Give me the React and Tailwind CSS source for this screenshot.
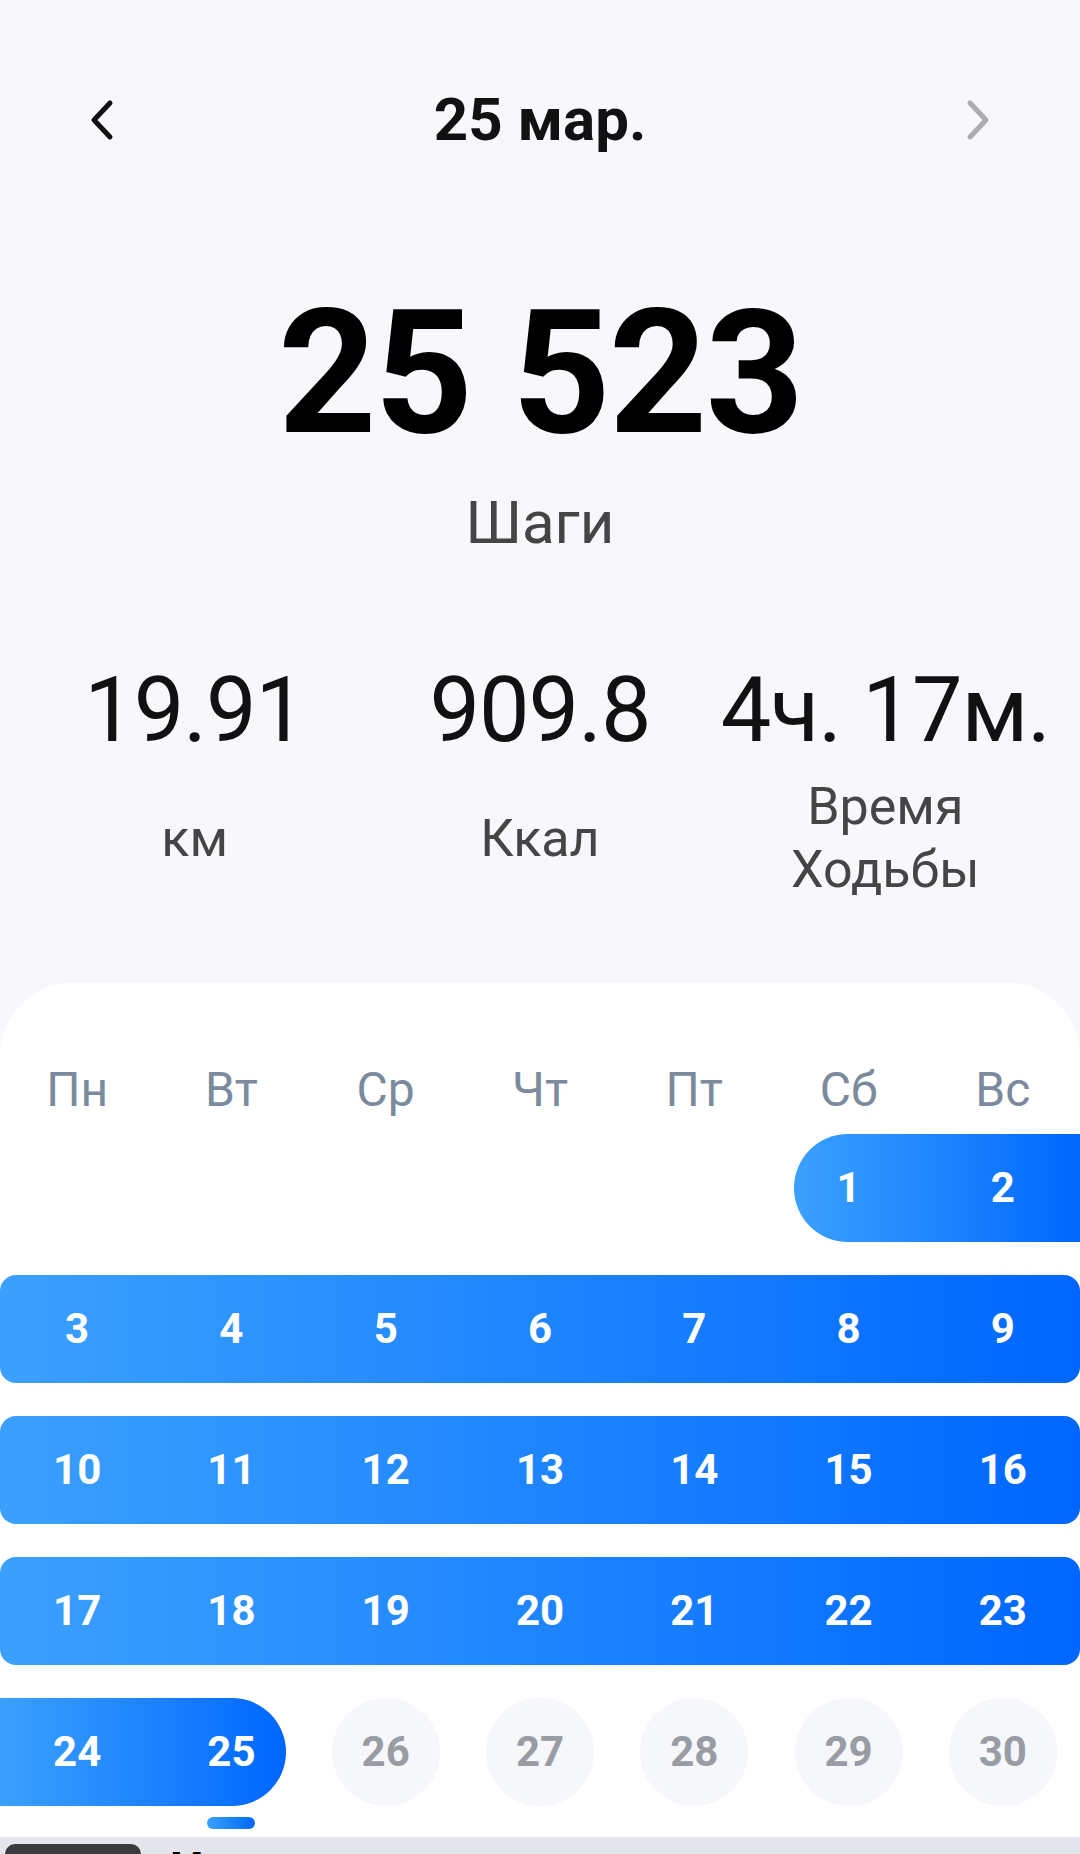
import React from 'react';

const weekdays = ['Пн', 'Вт', 'Ср', 'Чт', 'Пт', 'Сб', 'Вс'];

const colStart = ['col-start-1', 'col-start-2', 'col-start-3', 'col-start-4', 'col-start-5', 'col-start-6', 'col-start-7'];

// each week: day numbers by column, and the class of the selected range bar
const weeks = [
  { days: [null, null, null, null, null, 1, 2], bar: 'col-start-6 col-span-2 ml-[23px] rounded-l-full rounded-r-[16px]', sel: 7 },
  { days: [3, 4, 5, 6, 7, 8, 9], bar: 'col-start-1 col-span-7 rounded-[16px]', sel: 7 },
  { days: [10, 11, 12, 13, 14, 15, 16], bar: 'col-start-1 col-span-7 rounded-[16px]', sel: 7 },
  { days: [17, 18, 19, 20, 21, 22, 23], bar: 'col-start-1 col-span-7 rounded-[16px]', sel: 7 },
  { days: [24, 25, 26, 27, 28, 29, 30], bar: 'col-start-1 col-span-2 mr-[23px] rounded-l-[16px] rounded-r-full', sel: 2 },
];

const Chevron = ({ dir, color }) => (
  <svg width="30" height="44" viewBox="0 0 30 44" fill="none">
    <path
      d={dir === 'left' ? 'M22 5 L6 22 L22 39' : 'M8 5 L24 22 L8 39'}
      stroke={color}
      strokeWidth="5"
      strokeLinecap="round"
      strokeLinejoin="round"
    />
  </svg>
);

const Stat = ({ value }) => (
  <div className="text-center text-[90px] leading-none text-[#111111] tracking-[-1px]">{value}</div>
);

const WeekRow = ({ week }) => (
  <div className="grid grid-cols-7 h-[108px]">
    <div className={`row-start-1 h-[108px] bg-linear-to-r from-[#3ba0fd] to-[#0066ff] ${week.bar}`} />
    {week.days.map((d, i) => {
      if (d === null) return null;
      const selected = i < week.sel;
      return (
        <div key={d} className={`row-start-1 ${colStart[i]} flex items-center justify-center`}>
          {selected ? (
            <span className="text-[42px] font-bold text-white leading-none">{d}</span>
          ) : (
            <span className="w-[108px] h-[108px] rounded-full bg-[#f6f7fb] flex items-center justify-center text-[42px] font-bold text-[#9a9ca4] leading-none">
              {d}
            </span>
          )}
        </div>
      );
    })}
  </div>
);

export default function App() {
  return (
    <div className="min-h-screen bg-[#f8f8fc] font-['Roboto',sans-serif] overflow-hidden">
      <div className="pt-[60px] h-[180px] px-[88px] flex items-center justify-between">
        <Chevron dir="left" color="#111111" />
        <div className="text-[60px] font-bold leading-none text-[#111111]">25 мар.</div>
        <Chevron dir="right" color="#ababb1" />
      </div>

      <div className="mt-[107px] text-center text-[172px] font-bold leading-none text-black tracking-[-2px]">
        25 523
      </div>
      <div className="mt-[34px] text-center text-[60px] leading-none text-[#454545]">Шаги</div>

      <div className="mt-[113px] px-[22px] grid grid-cols-3">
        <Stat value="19.91" />
        <Stat value="909.8" />
        <Stat value="4ч. 17м." />
      </div>
      <div className="mt-[19px] px-[22px] grid grid-cols-3 items-center h-[126px] text-[52px] leading-[63px] text-[#454545] text-center">
        <div>км</div>
        <div>Ккал</div>
        <div>
          Время
          <br />
          Ходьбы
        </div>
      </div>

      <div className="mt-[82px] bg-white rounded-t-[72px] pt-[83px]">
        <div className="grid grid-cols-7">
          {weekdays.map((w) => (
            <div key={w} className="text-center text-[48px] leading-none text-[#7b8a9c]">
              {w}
            </div>
          ))}
        </div>

        <div className="mt-[20px] flex flex-col gap-[33px]">
          {weeks.map((w, i) => (
            <WeekRow key={i} week={w} />
          ))}
        </div>

        <div className="mt-[11px] grid grid-cols-7">
          <div className="col-start-2 justify-self-center w-[48px] h-[12px] rounded-full bg-linear-to-r from-[#3ba0fd] to-[#0066ff]" />
        </div>

        <div className="mt-[8px] h-[80px] bg-[#e4e6ee] pt-[7px] pl-[5px] flex items-start gap-[29px]">
          <div className="w-[136px] h-[60px] rounded-[10px] bg-[#3a3a3c]" />
          <div className="pt-[2px] text-[48px] font-bold leading-none text-black">Итоги</div>
        </div>
      </div>
    </div>
  );
}
